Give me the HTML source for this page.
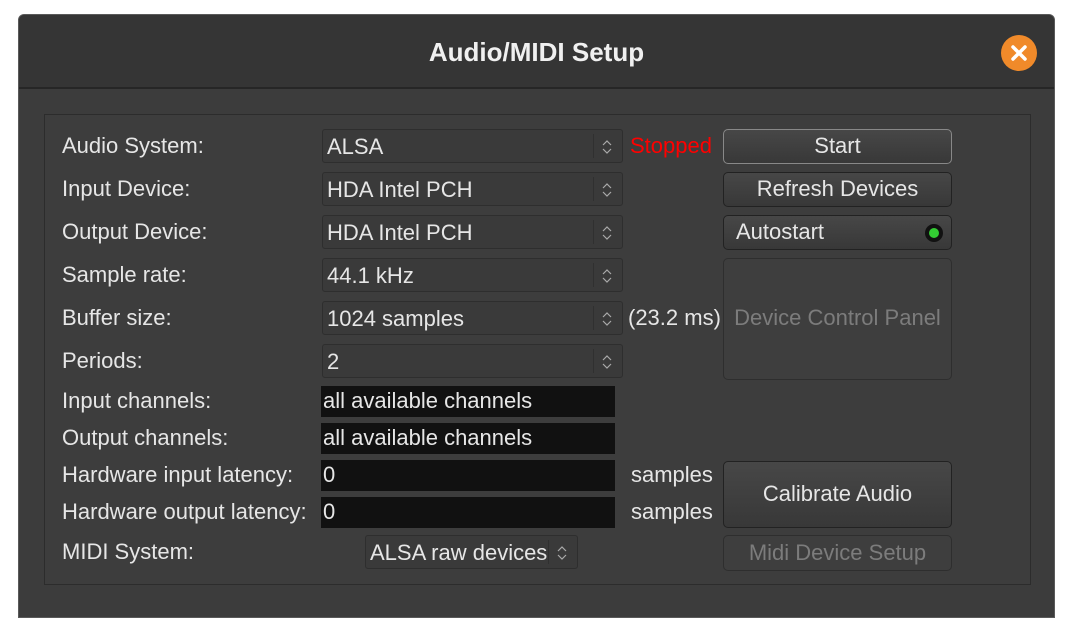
<!DOCTYPE html>
<html><head><meta charset="utf-8"><style>
*{box-sizing:border-box;margin:0;padding:0}
body{width:1075px;height:637px;background:#fff;position:relative;overflow:hidden;font-family:"Liberation Sans","DejaVu Sans",sans-serif;color:#e6e6e6}
.win{position:absolute;left:18px;top:14px;width:1037px;height:604px;background:#3c3c3c;border:1px solid #5a5a5a;border-radius:6px 6px 0 0;overflow:hidden}
.title{position:absolute;left:0;top:0;width:100%;height:74px;background:#353535;border-bottom:2px solid #262626}
.title span{position:absolute;left:0;right:0;top:22px;text-align:center;font-size:26px;font-weight:bold;color:#f0f0f0}
.close{position:absolute;left:982px;top:20px;width:36px;height:36px;border-radius:50%;background:#f08a2a}
.frame{position:absolute;left:44px;top:114px;width:987px;height:471px;border:1px solid #2c2c2c;background:#3d3d3d}
.a{position:absolute;font-size:22px;white-space:nowrap;line-height:22px}
.cb{position:absolute;left:322px;width:301px;height:34px;background:#3a3a3a;border:1px solid #2e2e2e;border-radius:3px;font-size:22px;line-height:22px;padding:6px 4px;white-space:nowrap}
.cb:after{content:"";position:absolute;right:28px;top:4px;bottom:4px;border-left:1px solid #303030}
.cb svg{position:absolute;right:10px;top:9px}
.en{position:absolute;left:321px;width:294px;height:31px;background:#111;font-size:22px;line-height:22px;padding:4px 2px;white-space:nowrap}
.bt{position:absolute;left:723px;width:229px;background:linear-gradient(#474747,#383838);border:1px solid #222;border-radius:5px;font-size:22px;text-align:center;white-space:nowrap}
.dis{color:#7c7c7c;background:#3e3e3e;border-color:#2e2e2e}
</style></head><body>
<div class="win">
<div class="title"><span>Audio/MIDI Setup</span></div>
<div class="close"><svg width="36" height="36"><path d="M12 12L24 24M24 12L12 24" stroke="#fff" stroke-width="3.5" stroke-linecap="round"/></svg></div>
</div>
<div class="frame"></div>
<div class="a" style="left:62px;top:135px">Audio System:</div>
<div class="a" style="left:62px;top:178px">Input Device:</div>
<div class="a" style="left:62px;top:221px">Output Device:</div>
<div class="a" style="left:62px;top:264px">Sample rate:</div>
<div class="a" style="left:62px;top:307px">Buffer size:</div>
<div class="a" style="left:62px;top:350px">Periods:</div>
<div class="a" style="left:62px;top:390px">Input channels:</div>
<div class="a" style="left:62px;top:427px">Output channels:</div>
<div class="a" style="left:62px;top:464px">Hardware input latency:</div>
<div class="a" style="left:62px;top:501px">Hardware output latency:</div>
<div class="a" style="left:62px;top:541px">MIDI System:</div>

<div class="cb" style="top:129px">ALSA<svg width="10" height="16"><path d="M1 6L5 2L9 6M1 10L5 14L9 10" fill="none" stroke="#aaa" stroke-width="1.2"/></svg></div>
<div class="cb" style="top:172px">HDA Intel PCH<svg width="10" height="16"><path d="M1 6L5 2L9 6M1 10L5 14L9 10" fill="none" stroke="#aaa" stroke-width="1.2"/></svg></div>
<div class="cb" style="top:215px">HDA Intel PCH<svg width="10" height="16"><path d="M1 6L5 2L9 6M1 10L5 14L9 10" fill="none" stroke="#aaa" stroke-width="1.2"/></svg></div>
<div class="cb" style="top:258px">44.1 kHz<svg width="10" height="16"><path d="M1 6L5 2L9 6M1 10L5 14L9 10" fill="none" stroke="#aaa" stroke-width="1.2"/></svg></div>
<div class="cb" style="top:301px">1024 samples<svg width="10" height="16"><path d="M1 6L5 2L9 6M1 10L5 14L9 10" fill="none" stroke="#aaa" stroke-width="1.2"/></svg></div>
<div class="cb" style="top:344px">2<svg width="10" height="16"><path d="M1 6L5 2L9 6M1 10L5 14L9 10" fill="none" stroke="#aaa" stroke-width="1.2"/></svg></div>
<div class="cb" style="top:535px;left:365px;width:213px">ALSA raw devices<svg width="10" height="16"><path d="M1 6L5 2L9 6M1 10L5 14L9 10" fill="none" stroke="#aaa" stroke-width="1.2"/></svg></div>

<div class="a" style="left:630px;top:135px;color:#f00">Stopped</div>
<div class="a" style="left:628px;top:307px">(23.2 ms)</div>

<div class="en" style="top:386px">all available channels</div>
<div class="en" style="top:423px">all available channels</div>
<div class="en" style="top:460px">0</div>
<div class="en" style="top:497px">0</div>
<div class="a" style="left:631px;top:464px">samples</div>
<div class="a" style="left:631px;top:501px">samples</div>

<div class="bt" style="top:129px;height:35px;line-height:32px;border-color:#888">Start</div>
<div class="bt" style="top:172px;height:35px;line-height:32px">Refresh Devices</div>
<div class="bt" style="top:215px;height:35px;line-height:32px;text-align:left;padding-left:12px">Autostart<span style="position:absolute;right:8px;top:8px;width:18px;height:18px;border-radius:50%;background:#111"><span style="position:absolute;left:4px;top:4px;width:10px;height:10px;border-radius:50%;background:#3c3"></span></span></div>
<div class="bt dis" style="top:258px;height:122px;line-height:118px">Device Control Panel</div>
<div class="bt" style="top:461px;height:67px;line-height:64px">Calibrate Audio</div>
<div class="bt dis" style="top:535px;height:36px;line-height:33px">Midi Device Setup</div>
</body></html>
